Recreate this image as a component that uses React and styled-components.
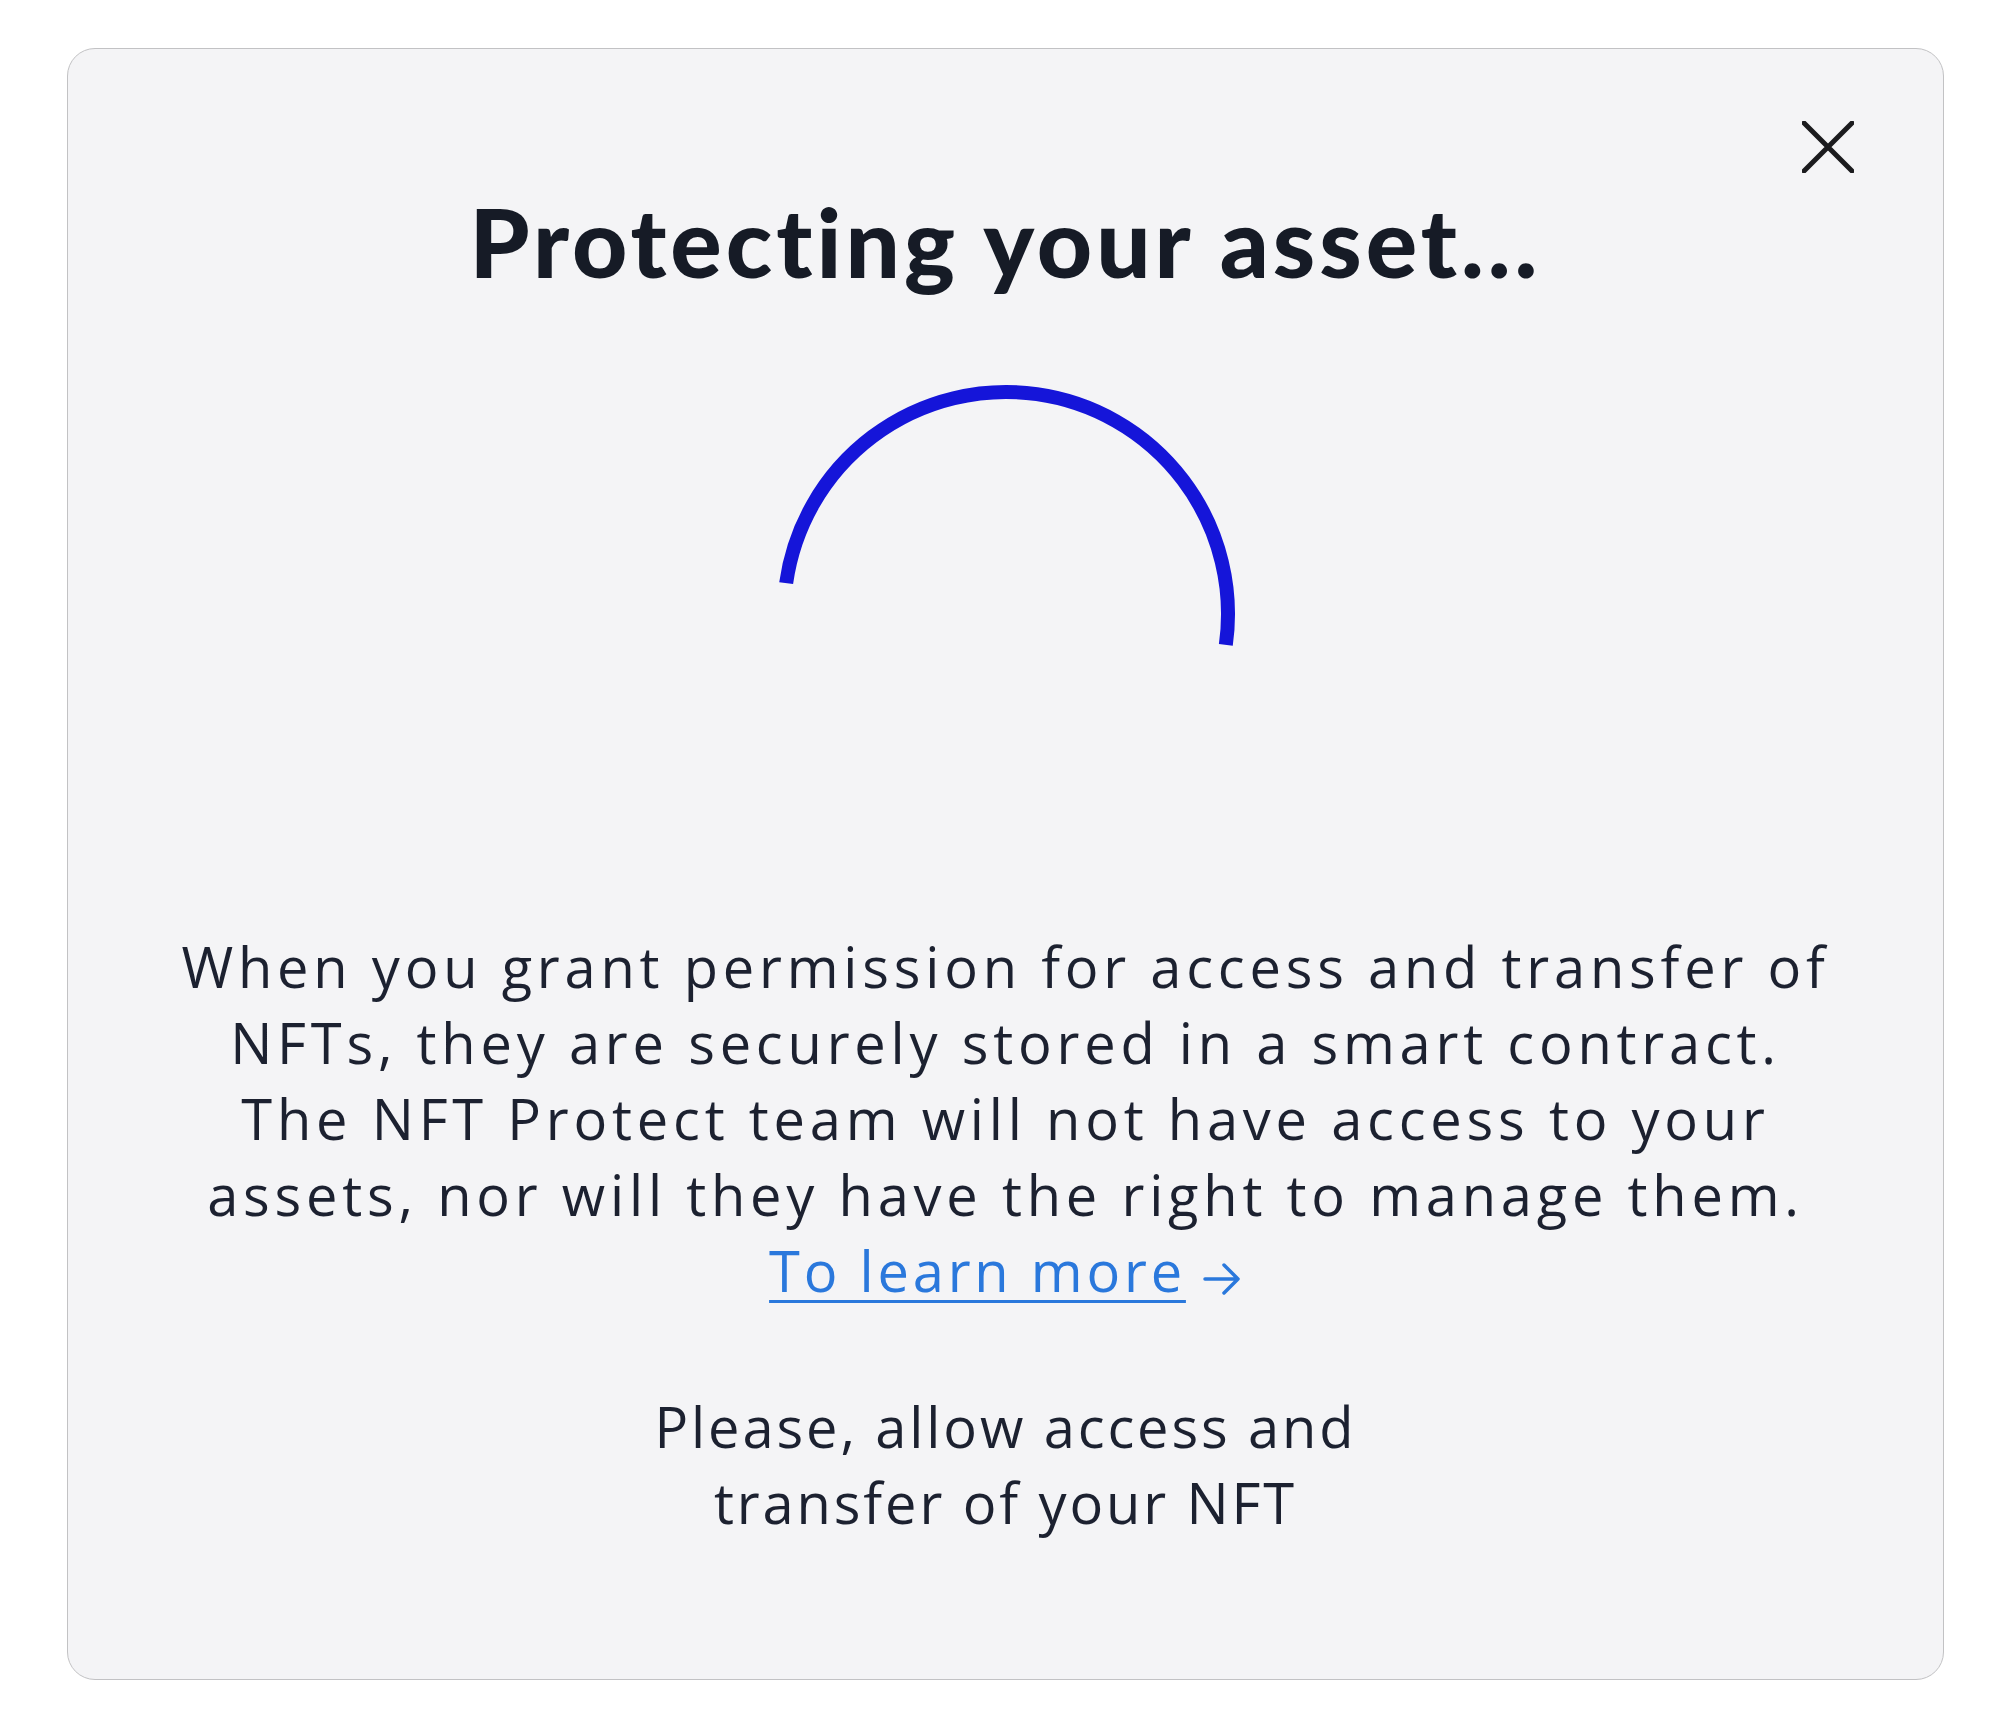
import React from 'react';
import styled, { createGlobalStyle } from 'styled-components';

const GlobalStyle = createGlobalStyle`
  html, body {
    margin: 0;
    padding: 0;
    background: #ffffff;
  }
  body {
    font-family: 'Open Sans', 'Noto Sans', sans-serif;
  }
`;

const Page = styled.div`
  padding: 48px 56px 39px 67px;
`;

const Card = styled.section`
  position: relative;
  box-sizing: border-box;
  width: 1877px;
  height: 1632px;
  display: flex;
  flex-direction: column;
  align-items: center;
  padding-top: 134px;
  background: #f4f4f6;
  border: 1px solid #c2c2c4;
  border-radius: 28px;
`;

const CloseButton = styled.button`
  position: absolute;
  top: 72px;
  right: 89px;
  width: 52px;
  height: 52px;
  padding: 0;
  border: none;
  background: transparent;
  cursor: pointer;
  color: #1b1b1e;
`;

const Title = styled.h1`
  margin: 0;
  font-family: 'Lato', sans-serif;
  font-weight: 900;
  font-size: 96px;
  line-height: 115px;
  color: #161b26;
  letter-spacing: 4px;
`;

const Spinner = styled.svg`
  display: block;
  margin-top: 86px;
  width: 460px;
  height: 460px;
`;

const Body = styled.p`
  margin: 84px 0 0;
  text-align: center;
  font-size: 56px;
  line-height: 76px;
  letter-spacing: 4.8px;
  color: #1c2130;
`;

const Line = styled.span`
  display: block;
`;

const LearnLink = styled.a`
  color: #2a78dc;
  letter-spacing: 3.8px;
  text-decoration: underline;
  text-decoration-thickness: 3px;
  text-underline-offset: 8px;
`;

const Arrow = styled.svg`
  display: inline-block;
  margin-left: 16px;
  width: 40px;
  height: 34px;
  vertical-align: -4px;
`;

const Footer = styled.p`
  margin: 80px 0 0;
  text-align: center;
  font-size: 56px;
  line-height: 76px;
  letter-spacing: 2.9px;
  color: #1c2130;
`;

function CloseIcon() {
  return (
    <svg width="52" height="52" viewBox="0 0 52 52" fill="none">
      <path d="M2 2 L50 50 M50 2 L2 50" stroke="currentColor" strokeWidth="5" strokeLinecap="round" />
    </svg>
  );
}

export default function App() {
  // half circle, turned 8 degrees clockwise
  const r = 222;
  const c = 230;
  const a = (8 * Math.PI) / 180;
  const x1 = c - r * Math.cos(a);
  const y1 = c - r * Math.sin(a);
  const x2 = c + r * Math.cos(a);
  const y2 = c + r * Math.sin(a);

  return (
    <>
      <GlobalStyle />
      <Page>
        <Card>
          <CloseButton aria-label="Close">
            <CloseIcon />
          </CloseButton>
          <Title>Protecting your asset...</Title>
          <Spinner viewBox="0 0 460 460">
            <path
              d={`M ${x1} ${y1} A ${r} ${r} 0 0 1 ${x2} ${y2}`}
              stroke="#1515d9"
              strokeWidth="14"
              fill="none"
            />
          </Spinner>
          <Body>
            <Line>When you grant permission for access and transfer of</Line>
            <Line>NFTs, they are securely stored in a smart contract.</Line>
            <Line>The NFT Protect team will not have access to your</Line>
            <Line>assets, nor will they have the right to manage them.</Line>
            <Line>
              <LearnLink href="#">To learn more</LearnLink>
              <Arrow viewBox="0 0 40 34" fill="none">
                <path d="M3 17 H36 M22 3 L36 17 L22 31" stroke="#2a78dc" strokeWidth="3.5" strokeLinecap="round" strokeLinejoin="round" />
              </Arrow>
            </Line>
          </Body>
          <Footer>
            <Line>Please, allow access and</Line>
            <Line>transfer of your NFT</Line>
          </Footer>
        </Card>
      </Page>
    </>
  );
}
